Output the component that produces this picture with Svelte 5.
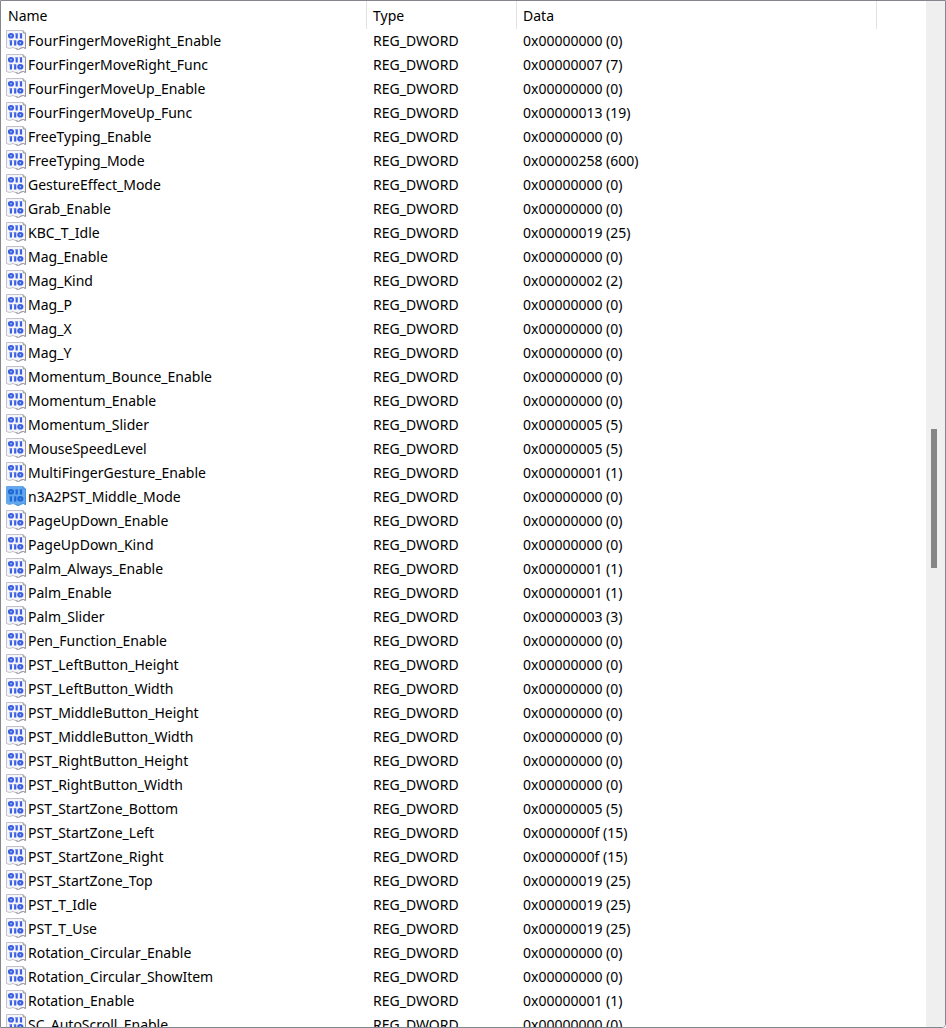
<script lang="ts">
  interface RegistryValue {
    name: string;
    data: number;
    selected?: boolean;
  }

  const TYPE = 'REG_DWORD';

  const values: RegistryValue[] = [
    { name: 'FourFingerMoveRight_Enable', data: 0 },
    { name: 'FourFingerMoveRight_Func', data: 7 },
    { name: 'FourFingerMoveUp_Enable', data: 0 },
    { name: 'FourFingerMoveUp_Func', data: 19 },
    { name: 'FreeTyping_Enable', data: 0 },
    { name: 'FreeTyping_Mode', data: 600 },
    { name: 'GestureEffect_Mode', data: 0 },
    { name: 'Grab_Enable', data: 0 },
    { name: 'KBC_T_Idle', data: 25 },
    { name: 'Mag_Enable', data: 0 },
    { name: 'Mag_Kind', data: 2 },
    { name: 'Mag_P', data: 0 },
    { name: 'Mag_X', data: 0 },
    { name: 'Mag_Y', data: 0 },
    { name: 'Momentum_Bounce_Enable', data: 0 },
    { name: 'Momentum_Enable', data: 0 },
    { name: 'Momentum_Slider', data: 5 },
    { name: 'MouseSpeedLevel', data: 5 },
    { name: 'MultiFingerGesture_Enable', data: 1 },
    { name: 'n3A2PST_Middle_Mode', data: 0, selected: true },
    { name: 'PageUpDown_Enable', data: 0 },
    { name: 'PageUpDown_Kind', data: 0 },
    { name: 'Palm_Always_Enable', data: 1 },
    { name: 'Palm_Enable', data: 1 },
    { name: 'Palm_Slider', data: 3 },
    { name: 'Pen_Function_Enable', data: 0 },
    { name: 'PST_LeftButton_Height', data: 0 },
    { name: 'PST_LeftButton_Width', data: 0 },
    { name: 'PST_MiddleButton_Height', data: 0 },
    { name: 'PST_MiddleButton_Width', data: 0 },
    { name: 'PST_RightButton_Height', data: 0 },
    { name: 'PST_RightButton_Width', data: 0 },
    { name: 'PST_StartZone_Bottom', data: 5 },
    { name: 'PST_StartZone_Left', data: 15 },
    { name: 'PST_StartZone_Right', data: 15 },
    { name: 'PST_StartZone_Top', data: 25 },
    { name: 'PST_T_Idle', data: 25 },
    { name: 'PST_T_Use', data: 25 },
    { name: 'Rotation_Circular_Enable', data: 0 },
    { name: 'Rotation_Circular_ShowItem', data: 0 },
    { name: 'Rotation_Enable', data: 1 },
    { name: 'SC_AutoScroll_Enable', data: 0 },
  ];

  // 0x00000013 (19)
  function formatDword(n: number): string {
    return `0x${n.toString(16).padStart(8, '0')} (${n})`;
  }
</script>

{#snippet dwordIcon()}
  <svg class="icon" viewBox="0 0 20 20" aria-hidden="true">
    <path class="paper" d="M.5.5H17L19.5 3V18.5L17.5 17.5L15 18L12.5 19.5L9.5 18.5L7 17.5L3.5 18.5L.5 17.5Z" />
    <path class="edge" d="M17 .5L17.5 3H19.5V18.5L17.5 17.5L15 18L12.5 19.5L9.5 18.5" />
    <g class="bits">
      <ellipse cx="5" cy="5.8" rx="2" ry="1.7" />
      <path d="M10.7 3.2V8.4M15 3.2V8.4" />
      <path d="M4.9 10.2V15.4M9.2 10.2V15.4" />
      <ellipse cx="14.3" cy="12.8" rx="2" ry="1.7" />
    </g>
    <path class="flags" d="M9 3.8H11M13.3 3.8H15M3.2 10.8H5M7.5 10.8H9.5" />
  </svg>
{/snippet}

<main class="pane">
  <div class="list">
    <table>
      <colgroup>
        <col class="col-name" />
        <col class="col-type" />
        <col class="col-data" />
        <col />
      </colgroup>
      <thead>
        <tr>
          <th scope="col">Name</th>
          <th scope="col">Type</th>
          <th scope="col">Data</th>
          <td></td>
        </tr>
      </thead>
      <tbody>
        {#each values as value (value.name)}
          <tr class:selected={value.selected}>
            <td>
              <div class="name">
                {@render dwordIcon()}
                <span>{value.name}</span>
              </div>
            </td>
            <td>{TYPE}</td>
            <td>{formatDword(value.data)}</td>
            <td></td>
          </tr>
        {/each}
      </tbody>
    </table>
  </div>
  <div class="scrollbar">
    <div class="thumb"></div>
  </div>
</main>

<style>
  :global(body) {
    margin: 0;
    background: #fff;
  }

  .pane {
    display: flex;
    box-sizing: border-box;
    height: 100vh;
    border: 1px solid #83858f;
    border-bottom-right-radius: 4px;
    overflow: hidden;
    background: #fff;
    color: #000;
    font-family: 'Noto Sans', 'Open Sans', sans-serif;
    font-size: 14px;
    line-height: 24px;
  }

  .list {
    flex: 1;
    min-width: 0;
    overflow: hidden;
  }

  table {
    width: 100%;
    table-layout: fixed;
    border-collapse: separate;
    border-spacing: 0;
  }

  .col-name {
    width: 366px;
  }

  .col-type {
    width: 150px;
  }

  .col-data {
    width: 360px;
  }

  th,
  td {
    padding: 0 0 0 6px;
    text-align: left;
    font-weight: normal;
    white-space: nowrap;
  }

  th {
    padding-top: 3px;
    padding-bottom: 1px;
    border-right: 1px solid #e2e2e2;
  }

  th:first-child {
    padding-left: 7px;
  }

  tbody td:first-child {
    padding-left: 5px;
  }

  .name {
    display: flex;
    align-items: flex-start;
    gap: 2px;
    height: 24px;
  }

  .icon {
    flex: none;
    width: 20px;
    height: 20px;
    margin-top: 1px;
  }

  .paper {
    fill: #f4f5fa;
    stroke: #c4c4c8;
  }

  .edge {
    fill: none;
    stroke: #96969a;
  }

  .bits {
    fill: none;
    stroke: #3b5fe2;
    stroke-width: 2.2;
  }

  .flags {
    fill: none;
    stroke: #7f97ea;
  }

  .selected .paper {
    fill: #62a8ee;
    stroke: #68a8e8;
  }

  .selected .edge {
    stroke: #4a8fd4;
  }

  .selected .bits {
    stroke: #1f66d6;
  }

  .selected .flags {
    stroke: #3f86e0;
  }

  .scrollbar {
    flex: none;
    display: flex;
    flex-direction: column;
    align-items: center;
    width: 19px;
    background: #efefef;
  }

  .scrollbar::before {
    content: '';
    flex: 428;
  }

  .thumb {
    flex: 139;
    width: 6px;
    margin-right: 3px;
    background: #868686;
  }

  .scrollbar::after {
    content: '';
    flex: 459;
  }
</style>
